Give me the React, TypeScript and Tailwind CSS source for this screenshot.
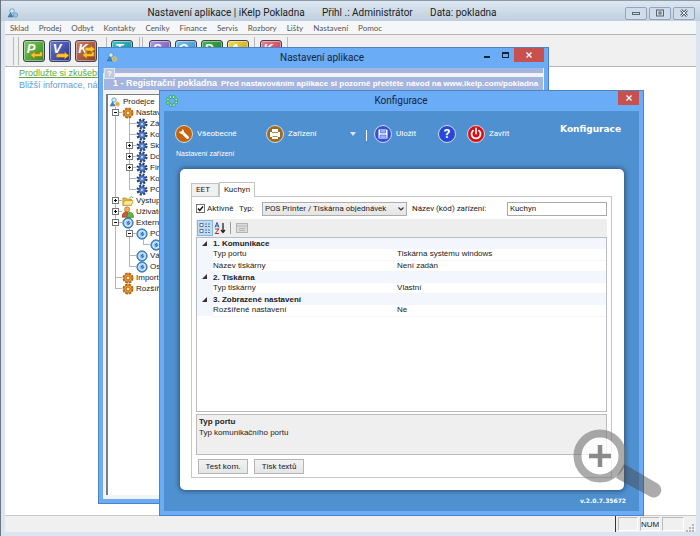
import { useState } from 'react';
import type { ReactNode } from 'react';

const MENU = ['Sklad', 'Prodej', 'Odbyt', 'Kontakty', 'Ceníky', 'Finance', 'Servis', 'Rozbory', 'Lišty', 'Nastavení', 'Pomoc'];

type NodeIcon = 'gear' | 'cog' | 'folder' | 'users' | 'ext';

interface TreeRow {
  id: number;
  // one letter per column: I line, T branch, L last branch, P plus, M minus
  guides: string;
  icon: NodeIcon;
  label: string;
}

const TREE: TreeRow[] = [
  { id: 1, guides: 'M', icon: 'gear', label: 'Nastavení' },
  { id: 2, guides: 'IT', icon: 'cog', label: 'Základní' },
  { id: 3, guides: 'IT', icon: 'cog', label: 'Kontakty' },
  { id: 4, guides: 'IP', icon: 'cog', label: 'Sklad' },
  { id: 5, guides: 'IP', icon: 'cog', label: 'Doklady' },
  { id: 6, guides: 'IP', icon: 'cog', label: 'Firma' },
  { id: 7, guides: 'IT', icon: 'cog', label: 'Komunikace' },
  { id: 8, guides: 'IL', icon: 'cog', label: 'POS' },
  { id: 9, guides: 'P', icon: 'folder', label: 'Výstupy' },
  { id: 10, guides: 'P', icon: 'users', label: 'Uživatelé' },
  { id: 11, guides: 'M', icon: 'ext', label: 'Externí' },
  { id: 12, guides: 'IM', icon: 'ext', label: 'POS' },
  { id: 13, guides: 'IIL', icon: 'ext', label: 'Kuchyn' },
  { id: 14, guides: 'IT', icon: 'ext', label: 'Váhy' },
  { id: 15, guides: 'IL', icon: 'ext', label: 'Ostatní' },
  { id: 16, guides: 'T', icon: 'gear', label: 'Import' },
  { id: 17, guides: 'L', icon: 'gear', label: 'Rozšíření' },
];

const PROPERTIES = [
  {
    title: '1. Komunikace',
    rows: [
      { name: 'Typ portu', value: 'Tiskárna systému windows' },
      { name: 'Název tiskárny', value: 'Není zadán' },
    ],
  },
  { title: '2. Tiskárna', rows: [{ name: 'Typ tiskárny', value: 'Vlastní' }] },
  { title: '3. Zobrazené nastavení', rows: [{ name: 'Rozšířené nastavení', value: 'Ne' }] },
];

function AppIcon({ warm = false }: { warm?: boolean }) {
  return (
    <svg viewBox="0 0 12 10" className="h-[10px] w-3 shrink-0" aria-hidden="true">
      <circle cx="5" cy="3" r="2.2" fill="#d9ecf7" stroke="#5b93bd" strokeWidth=".8" />
      <path d="M1 9 L3.5 4.8 L6.3 9 Z" fill="#3f87c4" stroke="#2f6797" strokeWidth=".5" />
      <circle cx="8.5" cy="7" r="2.2" fill={warm ? '#e6a945' : '#9cc6de'} stroke={warm ? '#c7d9a0' : '#5b93bd'} strokeWidth=".7" />
    </svg>
  );
}

function Guide({ kind }: { kind: string }) {
  const box = kind === 'P' || kind === 'M';
  return (
    <svg viewBox="0 0 14 11" className="h-[11px] w-[14px] shrink-0" shapeRendering="crispEdges" aria-hidden="true">
      <path d={kind === 'L' ? 'M7.5 0V6' : 'M7.5 0V11'} stroke="#b5b5b5" fill="none" />
      {kind !== 'I' && <path d="M7.5 5.5H14" stroke="#b5b5b5" />}
      {box && <rect x="4.5" y="2.5" width="6" height="6" fill="#fff" stroke="#777" />}
      {box && <path d="M6 5.5h3" stroke="#111" />}
      {kind === 'P' && <path d="M7.5 4v3" stroke="#111" />}
    </svg>
  );
}

function TreeIcon({ icon }: { icon: NodeIcon }) {
  return (
    <svg viewBox="0 0 14 14" className="h-3 w-3 shrink-0" aria-hidden="true">
      {icon === 'gear' && (
        <g>
          <circle cx="7" cy="7" r="5.2" fill="#f5a637" stroke="#b36412" strokeWidth="2.4" strokeDasharray="2.9 1.18" />
          <circle cx="7" cy="7" r="4.6" fill="#f5a637" stroke="#b36412" strokeWidth=".8" />
          <circle cx="7" cy="7" r="2.4" fill="#fbe3b8" stroke="#9b520a" strokeWidth="1" />
        </g>
      )}
      {icon === 'cog' && (
        <g>
          <circle cx="7" cy="7" r="4.8" fill="none" stroke="#243f78" strokeWidth="3.4" strokeDasharray="2.2 1.57" />
          <circle cx="7" cy="7" r="3.8" fill="#5c86cb" stroke="#2c4c8c" strokeWidth="1" />
          <circle cx="7" cy="7" r="1.1" fill="#dce8fa" />
        </g>
      )}
      {icon === 'folder' && (
        <g>
          <path d="M1 3.5h4l1 1.2h5V12H1z" fill="#e9b93b" stroke="#a77d18" strokeWidth=".7" />
          <path d="M3 6.5h10L11 12H1z" fill="#ffe88a" stroke="#b48a1e" strokeWidth=".7" />
          <path d="M9 3.5c1-2 3-2 4 0" fill="none" stroke="#4fa440" />
        </g>
      )}
      {icon === 'users' && (
        <g>
          <circle cx="6" cy="4" r="3" fill="#f0b154" stroke="#a55d16" strokeWidth=".7" />
          <path d="M0 13c0-8 9-8 9 0z" fill="#d5592c" stroke="#8a2f12" strokeWidth=".7" />
          <path d="M5.5 13.300c0-8 8-8 8 0z" fill="#64b746" stroke="#2e7b1d" strokeWidth=".7" />
        </g>
      )}
      {icon === 'ext' && (
        <g>
          <circle cx="7" cy="7" r="6" fill="#4a96dc" stroke="#2b6dae" />
          <circle cx="7" cy="7" r="3.8" fill="#8cc1f0" stroke="#f4faff" strokeWidth="1.2" />
          <path d="M8.500 4.500L6 7h3L6.500 9.500" fill="none" stroke="#24578f" strokeWidth="1" />
        </g>
      )}
    </svg>
  );
}

function ToolKey({ letter, tone, arrow }: { letter: string; tone: string; arrow?: 'left' | 'right' | 'both' }) {
  return (
    <button
      type="button"
      className={`relative flex h-[22px] w-[22px] shrink-0 items-center justify-center rounded-[3px] border border-[#3b4354] bg-gradient-to-br ${tone} text-[13px] leading-none font-bold text-white italic shadow-[inset_0_0_0_1px_#ffffff66]`}
    >
      <span className="pr-[6px] pb-1">{letter}</span>
      {arrow && (
        <svg viewBox="0 0 22 22" className="absolute inset-0" aria-hidden="true">
          {arrow === 'right' ? (
            <path d="M7 15v3h9v2l5-4-5-4v2H9z" fill="#ffc531" stroke="#a66b08" strokeWidth=".7" />
          ) : (
            <path d="M20 12v5h-8v2.500l-5-4 5-4V14h5v-2z" fill="#ffc531" stroke="#a66b08" strokeWidth=".7" />
          )}
          {arrow === 'both' && <path d="M10 7h6V5l5 4-5 4v-2h-6z" fill="#ffc531" stroke="#a66b08" strokeWidth=".7" />}
        </svg>
      )}
    </button>
  );
}

function ToolSep() {
  return <div className="h-7 w-px shrink-0 bg-[#b9b9b9]" />;
}

function CaptionButton({ label, children }: { label: string; children: ReactNode }) {
  return (
    <button
      type="button"
      aria-label={label}
      className="flex h-[13px] w-[22px] items-center justify-center rounded-[2px] border border-[#93a3b8] bg-[#cfdcea]"
    >
      <svg viewBox="0 0 10 8" className="h-2 w-[10px]" fill="none" stroke="#5a6472" strokeWidth="1">
        {children}
      </svg>
    </button>
  );
}

function CloseButton({ className }: { className: string }) {
  return (
    <button type="button" aria-label="Close" className={`flex h-[14px] items-center justify-center bg-[#c8504f] ${className}`}>
      <svg viewBox="0 0 6 6" className="h-[6px] w-[6px]" stroke="#fff" strokeWidth="1.3" aria-hidden="true">
        <path d="M.5 .5l5 5M5.500 .5l-5 5" />
      </svg>
    </button>
  );
}

function RoundIcon({ tone, children }: { tone: string; children: ReactNode }) {
  return (
    <span className={`flex h-[18px] w-[18px] shrink-0 items-center justify-center rounded-full border border-[#d5d9e0] ${tone}`}>
      <svg viewBox="0 0 16 16" className="h-4 w-4" aria-hidden="true">
        {children}
      </svg>
    </span>
  );
}

function TreeWindow() {
  return (
    <section className="absolute top-[47px] right-[151px] bottom-8 left-[97px] flex flex-col border border-[#4d83c4] bg-[#6aacf6] px-1 pb-1">
      <header className="flex h-5 shrink-0 items-start">
        <span className="pt-1 pl-[3px]">
          <AppIcon warm />
        </span>
        <h2 className="flex-1 pt-[2px] pl-12 text-center font-[Roboto,sans-serif] text-[10px] leading-4 text-[#16263c]">Nastavení aplikace</h2>
        <button type="button" aria-label="Minimize" className="flex h-[14px] w-[18px] items-center justify-center">
          <span className="mt-[3px] h-[2px] w-[6px] bg-[#13233a]" />
        </button>
        <button type="button" aria-label="Maximize" className="flex h-[14px] w-[18px] items-center justify-center">
          <span className="h-[6px] w-[7px] border border-t-2 border-[#13233a]" />
        </button>
        <CloseButton className="w-[30px]" />
      </header>
      <div className="flex min-h-0 flex-1 flex-col bg-[#f3f3f5]">
        <div className="relative mr-px h-[5px] shrink-0 bg-[#a4b5e0]">
          <button
            type="button"
            className="absolute top-0 left-px flex h-[11px] w-[11px] items-start justify-center border border-[#dde3f2] bg-[#c2c9d8] text-[8px] leading-[9px] font-bold text-white"
          >
            ?
          </button>
        </div>
        <div className="mx-px mt-1 flex h-[13px] shrink-0 items-center bg-[#a4b5e0] pl-[9px] leading-none font-bold whitespace-nowrap text-white">
          <span className="pr-1 text-[9px]">1 - Registrační pokladna</span>
          <span className="text-[8px]">Před nastavováním aplikace si pozorně přečtěte návod na www.ikelp.com/pokladna</span>
        </div>
        <div className="mt-1 mr-1 mb-1 ml-[3px] min-h-0 flex-1 overflow-hidden border-t border-l-2 border-[#7d7d7d] bg-white pt-px text-[8px] leading-[11px] text-[#222]">
          <div className="flex h-[11px] items-center pl-px">
            <AppIcon warm />
            <span className="pl-[2px]">Prodejce</span>
          </div>
          <ul>
            {TREE.map((row) => (
              <li key={row.id} className="flex h-[11px] items-center whitespace-nowrap">
                {row.guides.split('').map((kind, i) => (
                  <Guide key={i} kind={kind} />
                ))}
                <TreeIcon icon={row.icon} />
                <span className="pl-[2px]">{row.label}</span>
              </li>
            ))}
          </ul>
        </div>
      </div>
    </section>
  );
}

function PropertyGrid() {
  return (
    <div className="min-h-0 flex-1 overflow-hidden border border-[#b8bcc2] bg-white">
      <table className="w-full table-fixed text-left">
        <colgroup>
          <col className="w-4" />
          <col className="w-[45%]" />
          <col />
        </colgroup>
        {PROPERTIES.map((group) => (
          <tbody key={group.title}>
            <tr className="h-[11px] bg-[#f3f6fc]">
              <td className="p-0">
                <svg viewBox="0 0 5 5" className="ml-[5px] h-[5px] w-[5px]" aria-hidden="true">
                  <path d="M5 0v5H0z" fill="#333" />
                </svg>
              </td>
              <th colSpan={2} className="p-0 leading-[11px] font-bold text-[#222]">
                {group.title}
              </th>
            </tr>
            {group.rows.map((row) => (
              <tr key={row.name} className="h-[11px]">
                <td className="bg-[#f3f6fc] p-0" />
                <td className="border-b border-[#f3f5f9] p-0 leading-[10px]">{row.name}</td>
                <td className="border-b border-[#f3f5f9] p-0 leading-[10px]">{row.value}</td>
              </tr>
            ))}
          </tbody>
        ))}
      </table>
    </div>
  );
}

function DevicePanel() {
  const [active, setActive] = useState(true);
  const [name, setName] = useState('Kuchyn');

  return (
    <div className="mr-[15px] ml-4 flex min-h-0 flex-1 flex-col rounded-[5px] bg-white pt-[13px] pr-3 pb-3 pl-[11px] text-[8px] text-[#222] shadow-[0_0_5px_1px_#26405fcc]">
      <div className="flex items-end font-[Roboto,sans-serif]" role="tablist">
        <button type="button" role="tab" aria-selected={false} className="h-[13px] w-7 border border-b-0 border-[#c3c3c3] bg-[#f0f0f0] pr-1 leading-3">
          EET
        </button>
        <button type="button" role="tab" aria-selected={true} className="z-10 -mb-px h-[15px] w-9 border border-b-0 border-[#c3c3c3] bg-white leading-3">
          Kuchyn
        </button>
      </div>
      <div className="flex min-h-0 flex-1 flex-col border border-[#c6c6c6] px-1 pt-1 pb-[3px]">
        <div className="flex h-[15px] shrink-0 items-center font-[Roboto,sans-serif] whitespace-nowrap">
          <label className="flex w-[43px] items-center gap-[2px]">
            <input
              type="checkbox"
              checked={active}
              onChange={(e) => setActive(e.target.checked)}
              className="peer h-[9px] w-[9px] appearance-none border border-[#777] bg-white"
            />
            <svg viewBox="0 0 9 9" className="pointer-events-none invisible -ml-[11px] h-[9px] w-[9px] peer-checked:visible" aria-hidden="true">
              <path d="M2 4.500l1.800 2L7 2.500" fill="none" stroke="#111" strokeWidth="1.400" />
            </svg>
            Aktivně
          </label>
          <label htmlFor="device-type" className="w-[23px]">
            Typ:
          </label>
          <div className="relative h-[14px] w-[145px]">
            <select id="device-type" className="h-full w-full appearance-none border border-[#adadad] bg-gradient-to-b from-[#f2f2f2] to-[#e4e4e4] pl-[2px] text-[8px] leading-3">
              <option>POS Printer / Tiskárna objednávek</option>
            </select>
            <svg viewBox="0 0 6 4" className="pointer-events-none absolute top-[5px] right-[3px] h-1 w-[6px]" aria-hidden="true">
              <path d="M.5 .5L3 3L5.500 .5" fill="none" stroke="#333" strokeWidth="1.200" />
            </svg>
          </div>
          <label htmlFor="device-name" className="min-w-0 flex-1 pl-[5px]">
            Název (kód) zařízení:
          </label>
          <input
            id="device-name"
            value={name}
            onChange={(e) => setName(e.target.value)}
            className="h-[14px] w-[100px] border border-[#ababab] bg-white px-[2px] text-[8px] leading-3"
          />
        </div>
        <div className="mt-[3px] flex h-[18px] shrink-0 items-center bg-[#eee] pl-px">
          <button type="button" aria-label="Categorized" className="flex h-4 w-4 items-center justify-center border border-[#85b6e2] bg-[#bcdcf7]">
            <svg viewBox="0 0 12 12" className="h-3 w-3" stroke="#4d5f76" fill="#fff" strokeWidth=".8">
              <rect x="1" y="1.500" width="3" height="3" />
              <rect x="1" y="7.500" width="3" height="3" />
              <path d="M6 2h2M9 2h2M6 4.500h2M9 4.500h2M6 8h2M9 8h2M6 10.500h2M9 10.500h2" />
            </svg>
          </button>
          <button type="button" aria-label="Alphabetical" className="flex h-4 w-[14px] items-center justify-center">
            <svg viewBox="0 0 12 12" className="h-3 w-3" fill="none" strokeWidth="1">
              <path d="M1 5.500L3 .5L5 5.500M1.800 4h2.400" stroke="#2d50a5" />
              <path d="M1.200 7H5L1.200 11.500H5" stroke="#a62c2c" />
              <path d="M9 1v9.500M7 8l2 2.500L11 8" stroke="#222" strokeWidth="1.300" />
            </svg>
          </button>
          <div className="mx-[3px] h-3 w-px bg-[#9c9c9c]" />
          <button type="button" aria-label="Property pages" className="flex h-4 w-4 items-center justify-center">
            <svg viewBox="0 0 12 12" className="h-3 w-3" fill="#dcdcdc" stroke="#b4b4b4">
              <rect x=".5" y="1.500" width="11" height="9" />
              <path d="M1 4h10M3 6.500h6M3 8.500h6" />
            </svg>
          </button>
        </div>
        <PropertyGrid />
        <div className="mt-[2px] h-[41px] shrink-0 border border-[#bcbcbc] bg-[#efefef] px-[2px] pt-px leading-[11px]">
          <h3 className="font-bold">Typ portu</h3>
          <p>Typ komunikačního portu</p>
        </div>
        <div className="mt-1 flex shrink-0 gap-[6px] pl-[2px] font-[Roboto,sans-serif]">
          <button type="button" className="h-[15px] w-[50px] border border-[#b4b4b4] bg-gradient-to-b from-[#f2f2f2] to-[#e5e5e5] leading-3">
            Test kom.
          </button>
          <button type="button" className="h-[15px] w-[50px] border border-[#b4b4b4] bg-gradient-to-b from-[#f2f2f2] to-[#e5e5e5] leading-3">
            Tisk textů
          </button>
        </div>
      </div>
    </div>
  );
}

function ConfigWindow() {
  return (
    <section className="absolute top-[90px] right-14 bottom-5 left-[158px] flex flex-col border border-[#4d83c4] bg-[#6aacf6] px-1 pb-1">
      <header className="flex h-5 shrink-0 items-start">
        <svg viewBox="0 0 14 14" className="mt-[3px] ml-px h-[14px] w-[14px]" aria-hidden="true">
          <circle cx="7" cy="7" r="4.400" fill="none" stroke="#2db34f" strokeWidth="3.200" strokeDasharray="2.600 .85" />
          <circle cx="7" cy="7" r="4.400" fill="none" stroke="#c9f3c4" strokeWidth="1.4" strokeDasharray="1.400 2.050" strokeDashoffset="-.6" />
        </svg>
        <h2 className="flex-1 pt-[2px] pl-[5px] text-center font-[Roboto,sans-serif] text-[10px] leading-4 text-[#16263c]">Konfigurace</h2>
        <CloseButton className="w-[21px]" />
      </header>
      <div className="flex min-h-0 flex-1 flex-col bg-[#4f91d0]">
        <div className="flex h-8 shrink-0 items-center pt-[13px] pl-[11px] font-[Roboto,sans-serif] text-[8px] text-white">
          <button type="button" className="flex w-[91px] items-center gap-1">
            <RoundIcon tone="bg-[#c4640c]">
              <path d="M6.500 6.500L11.500 11.500" stroke="#fff" strokeWidth="3" strokeLinecap="round" />
              <path d="M3 5.500a3 3 0 0 0 4.500 2A3 3 0 0 0 6 2.900L6.300 5 4.800 5.800z" fill="#fff" />
            </RoundIcon>
            Všeobecné
          </button>
          <button type="button" className="flex w-[84px] items-center gap-1">
            <RoundIcon tone="bg-[#9b6c22]">
              <path d="M5 3h6v3h2v5h-2v2H5v-2H3V6h2z" fill="#fff" />
              <path d="M5 6.500h6M5.500 10.500h5" stroke="#9b6c22" strokeWidth=".8" />
            </RoundIcon>
            Zařízení
          </button>
          <svg viewBox="0 0 6 4" className="h-1 w-[6px]" aria-hidden="true">
            <path d="M0 0h6L3 4z" fill="#dbe6f2" />
          </svg>
          <div className="mt-1 ml-[10px] h-[11px] w-px bg-white" />
          <button type="button" className="ml-[7px] flex w-[64px] items-center gap-1">
            <RoundIcon tone="bg-[#3151d6]">
              <path d="M3.500 3.500h8l1 1v8h-9z" fill="#fff" />
              <path d="M5.500 4v3h5V4M5 12V9h6v3" fill="#9db2f2" stroke="#3151d6" strokeWidth=".6" />
            </RoundIcon>
            Uložit
          </button>
          <button type="button" className="mr-[11px] text-[13px] leading-none font-bold">
            <span className="flex h-[18px] w-[18px] items-center justify-center rounded-full border border-[#d5d9e0] bg-[#2846d8]">?</span>
          </button>
          <button type="button" className="flex items-center gap-1">
            <RoundIcon tone="bg-[#dc0d12]">
              <path d="M5 4.600a4.500 4.500 0 1 0 6 0M8 2.500v5" fill="none" stroke="#fff" strokeWidth="1.800" strokeLinecap="round" />
            </RoundIcon>
            Zavřít
          </button>
          <h1 className="flex-1 pr-[18px] pb-2 text-right font-['DejaVu_Sans',sans-serif] text-[9px] font-bold">Konfigurace</h1>
        </div>
        <p className="h-[26px] shrink-0 pt-[5px] pl-3 text-[7px] leading-3 text-white">Nastavení zařízení</p>
        <DevicePanel />
        <footer className="h-[21px] shrink-0 pr-[13px] text-right font-['DejaVu_Sans',sans-serif] text-[6px] leading-[22px] font-bold text-white">v.2.0.7.35672</footer>
      </div>
    </section>
  );
}

function Magnifier() {
  return (
    <svg viewBox="0 0 90 72" className="pointer-events-none absolute right-[37px] bottom-[36px] h-[72px] w-[90px]" aria-hidden="true">
      <circle cx="27" cy="28" r="19" fill="#fff" fillOpacity=".75" />
      <circle cx="27" cy="28" r="22.500" fill="none" stroke="#777" strokeOpacity=".62" strokeWidth="8" />
      <path d="M16 28h22M27 17v22" stroke="#8a8a8a" strokeWidth="4.500" />
      <path d="M51 36l33.500 19.500a7.300 7.300 0 0 1-7.500 13L43 50z" fill="#444" fillOpacity=".45" />
    </svg>
  );
}

export default function App() {
  return (
    <div className="relative flex h-screen flex-col overflow-hidden border-l border-[#6c7580] bg-[#dbe5f2] px-1 pb-1 font-['Liberation_Sans',Arial,sans-serif]">
      <header className="-mx-1 flex h-[21px] shrink-0 items-center border-t border-[#8d99a6] bg-gradient-to-b from-[#dce7f1] to-[#bfcfde] pt-1 pr-[5px] pl-[6px]">
        <AppIcon />
        <h1 className="flex-1 text-center font-[Roboto,sans-serif] text-[10px] leading-4 whitespace-pre text-[#222]">
          {'Nastavení aplikace | iKelp Pokladna       Přihl .: Administrátor       Data: pokladna'}
        </h1>
        <div className="flex gap-[2px]">
          <CaptionButton label="Minimize">
            <rect x="1.500" y="3.500" width="7" height="2" />
          </CaptionButton>
          <CaptionButton label="Restore">
            <rect x="1.500" y="1" width="7" height="6" />
            <rect x="4" y="3" width="2" height="2" />
          </CaptionButton>
          <CaptionButton label="Close">
            <path d="M2 1l6 6M8 1L2 7" strokeWidth="2.600" />
            <path d="M2 1l6 6M8 1L2 7" stroke="#e9eff6" />
          </CaptionButton>
        </div>
      </header>
      <nav className="flex h-[14px] shrink-0 items-center gap-[10px] border-b border-[#b5b5b5] bg-[#f5f6f8] pl-[5px] font-[Lato,sans-serif] text-[8px] leading-3 text-[#555]">
        {MENU.map((item) => (
          <button key={item} type="button">
            {item}
          </button>
        ))}
      </nav>
      <div className="flex h-8 shrink-0 items-center gap-1 border-b border-[#b5b5b5] bg-[#f0f0f0] pl-2">
        <ToolSep />
        <ToolSep />
        <ToolKey letter="P" tone="from-[#7cc95a] to-[#2f8a22]" arrow="left" />
        <ToolKey letter="V" tone="from-[#6a78d2] to-[#272f8d]" arrow="right" />
        <ToolKey letter="K" tone="from-[#c98168] to-[#8e3a22]" arrow="both" />
        <div className="w-[1px]" />
        <ToolSep />
        <ToolKey letter="T" tone="from-[#3cc4cb] to-[#0f8088]" />
        <div className="flex gap-[2px] px-[2px]">
          <ToolSep />
          <ToolSep />
        </div>
        <ToolKey letter="S" tone="from-[#b596e0] to-[#6d45a8]" />
        <ToolKey letter="C" tone="from-[#7cc4ee] to-[#2c80bb]" />
        <ToolKey letter="D" tone="from-[#45b94c] to-[#15721d]" />
        <ToolKey letter="A" tone="from-[#f3dc47] to-[#bb9a10]" />
        <div className="px-px">
          <ToolSep />
        </div>
        <ToolKey letter="K" tone="from-[#f07d8e] to-[#b92c42]" />
        <div className="pl-px">
          <ToolSep />
        </div>
      </div>
      <main className="min-h-0 flex-1 bg-white pl-[14px] text-[9px] leading-3">
        <a href="#licence" className="block w-fit text-[#62a83b] underline">
          Prodlužte si zkušební
        </a>
        <p className="text-[#5f9cd8]">Bližší informace, návod</p>
      </main>
      <footer className="flex h-[17px] shrink-0 items-stretch justify-end gap-[2px] border-t border-[#c9c9c9] bg-[#f0f0f0] text-[9px] leading-[13px] text-[#222]">
        <div className="border-l border-[#333]" />
        <div className="my-px w-5 border border-r-white border-b-white border-[#bbb]" />
        <div className="my-px w-5 border border-r-white border-b-white border-[#bbb] text-center text-[8px]">NUM</div>
        <div className="my-px w-[22px] border border-r-white border-b-white border-[#bbb]" />
        <svg viewBox="0 0 8 8" className="mr-[2px] h-2 w-2 self-end" fill="#b5b5b5" aria-hidden="true">
          <path d="M6 0h2v2H6zM3 3h2v2H3zM6 3h2v2H6zM0 6h2v2H0zM3 6h2v2H3zM6 6h2v2H6z" />
        </svg>
      </footer>
      <TreeWindow />
      <ConfigWindow />
      <Magnifier />
    </div>
  );
}
